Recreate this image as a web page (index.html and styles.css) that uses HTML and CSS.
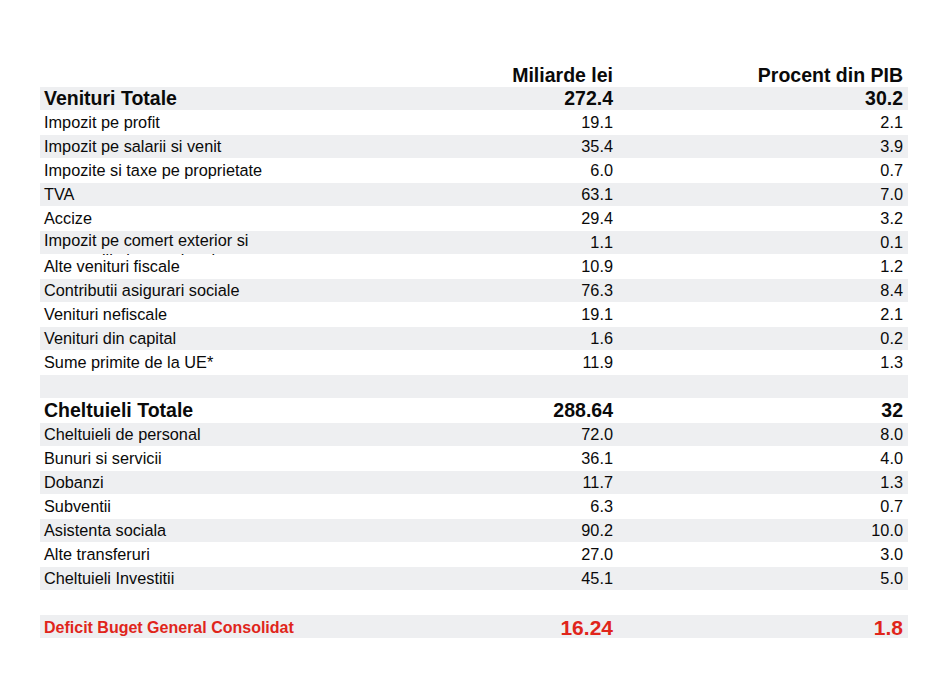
FILE: index.html
```html
<!DOCTYPE html>
<html lang="ro">
<head>
<meta charset="utf-8">
<title>Buget General Consolidat</title>
<link rel="stylesheet" href="styles.css">
</head>
<body>
<div class="sheet">
  <div class="row head"><div class="lab"></div><div class="num">Miliarde lei</div><div class="num">Procent din PIB</div></div>
  <div class="row total shade"><div class="lab">Venituri Totale</div><div class="num">272.4</div><div class="num">30.2</div></div>
  <div class="row"><div class="lab">Impozit pe profit</div><div class="num">19.1</div><div class="num">2.1</div></div>
  <div class="row shade"><div class="lab">Impozit pe salarii si venit</div><div class="num">35.4</div><div class="num">3.9</div></div>
  <div class="row"><div class="lab">Impozite si taxe pe proprietate</div><div class="num">6.0</div><div class="num">0.7</div></div>
  <div class="row shade"><div class="lab">TVA</div><div class="num">63.1</div><div class="num">7.0</div></div>
  <div class="row"><div class="lab">Accize</div><div class="num">29.4</div><div class="num">3.2</div></div>
  <div class="row shade"><div class="lab wrap">Impozit pe comert exterior si tranzactiile internationale</div><div class="num">1.1</div><div class="num">0.1</div></div>
  <div class="row"><div class="lab">Alte venituri fiscale</div><div class="num">10.9</div><div class="num">1.2</div></div>
  <div class="row shade"><div class="lab">Contributii asigurari sociale</div><div class="num">76.3</div><div class="num">8.4</div></div>
  <div class="row"><div class="lab">Venituri nefiscale</div><div class="num">19.1</div><div class="num">2.1</div></div>
  <div class="row shade"><div class="lab">Venituri din capital</div><div class="num">1.6</div><div class="num">0.2</div></div>
  <div class="row"><div class="lab">Sume primite de la UE*</div><div class="num">11.9</div><div class="num">1.3</div></div>
  <div class="row shade"><div class="lab"></div><div class="num"></div><div class="num"></div></div>
  <div class="row total"><div class="lab">Cheltuieli Totale</div><div class="num">288.64</div><div class="num">32</div></div>
  <div class="row shade"><div class="lab">Cheltuieli de personal</div><div class="num">72.0</div><div class="num">8.0</div></div>
  <div class="row"><div class="lab">Bunuri si servicii</div><div class="num">36.1</div><div class="num">4.0</div></div>
  <div class="row shade"><div class="lab">Dobanzi</div><div class="num">11.7</div><div class="num">1.3</div></div>
  <div class="row"><div class="lab">Subventii</div><div class="num">6.3</div><div class="num">0.7</div></div>
  <div class="row shade"><div class="lab">Asistenta sociala</div><div class="num">90.2</div><div class="num">10.0</div></div>
  <div class="row"><div class="lab">Alte transferuri</div><div class="num">27.0</div><div class="num">3.0</div></div>
  <div class="row shade"><div class="lab">Cheltuieli Investitii</div><div class="num">45.1</div><div class="num">5.0</div></div>
  <div class="row"><div class="lab"></div><div class="num"></div><div class="num"></div></div>
  <div class="row deficit shade"><div class="lab">Deficit Buget General Consolidat</div><div class="num">16.24</div><div class="num">1.8</div></div>
</div>
</body>
</html>
```

FILE: styles.css
```css
html, body {
  margin: 0;
  padding: 0;
  background: #ffffff;
}

body {
  font-family: "Liberation Sans", Arial, Helvetica, sans-serif;
  color: #0a0a0a;
}

.sheet {
  width: 868px;
  padding: 63px 25px 0 40px;
}

.row {
  display: grid;
  grid-template-columns: 428px 150px 290px;
  height: 23px;
  margin-bottom: 1px;
  font-size: 16.3px;
  line-height: 23px;
}

.row.shade {
  background: #eeeff1;
}

.lab {
  padding-left: 4px;
  white-space: nowrap;
}

.num {
  text-align: right;
  padding-right: 5px;
}

.row.head {
  font-size: 19.5px;
  font-weight: bold;
  line-height: 24px;
}

.row.total {
  font-size: 19.5px;
  font-weight: bold;
}

.lab.wrap {
  white-space: normal;
  width: 235px;
  line-height: 20px;
  height: 25px;
  margin-top: -1px;
  overflow: hidden;
}

.row.deficit {
  color: #e0251b;
  font-weight: bold;
}

.row.deficit .lab {
  font-size: 16px;
  padding-top: 1px;
}

.row.deficit .num {
  font-size: 21px;
  padding-top: 1px;
}
```
